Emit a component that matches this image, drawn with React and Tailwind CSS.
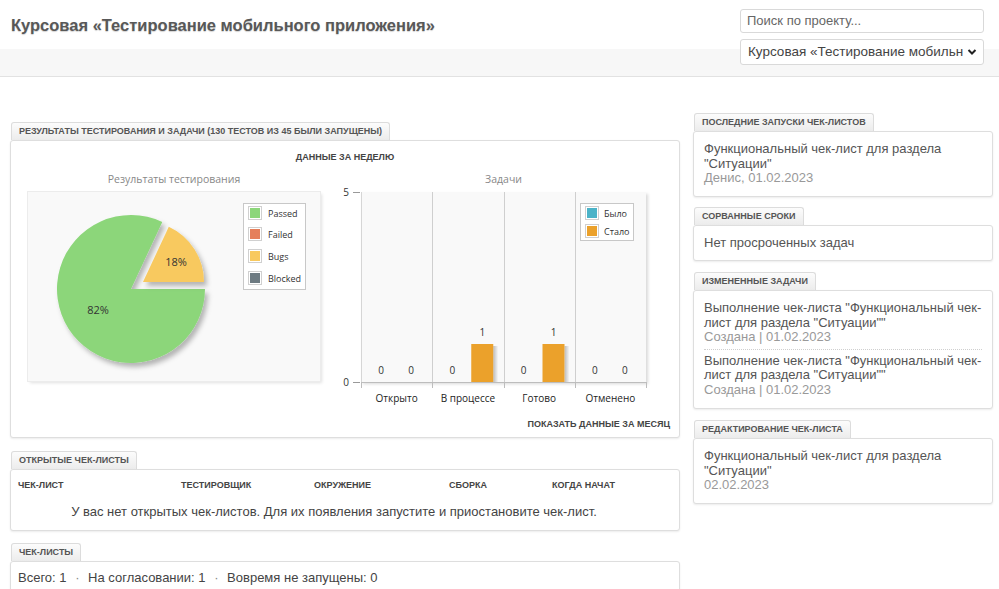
import React from "react";

const chartFont = { fontFamily: '"Open Sans", "DejaVu Sans", sans-serif' };

function Tab({ children }) {
  return (
    <div className="block w-fit ml-px h-[18px] px-[7px] leading-[17px] text-[9px] font-bold uppercase text-[#555] border border-b-0 border-[#dcdcdc] rounded-t-[3px] bg-gradient-to-b from-[#fcfcfc] to-[#ececec] whitespace-nowrap">
      {children}
    </div>
  );
}

function Panel({ className = "", children }) {
  return (
    <div className={`bg-white border border-[#dedede] rounded-[3px] shadow-[0_1px_2px_rgba(0,0,0,0.08)] ${className}`}>
      {children}
    </div>
  );
}

function PieChart() {
  const legend = [
    ["Passed", "#8cd67a"],
    ["Failed", "#e57f5b"],
    ["Bugs", "#f8c95f"],
    ["Blocked", "#6e7b82"],
  ];
  return (
    <div className="w-[292px] h-[189px] bg-[#f9f9f9] shadow-[0_0_0_1px_#ececec,2px_2px_3px_rgba(0,0,0,0.12)]">
      <svg width="292" height="189" className="block" style={chartFont}>
        <defs>
          <filter id="pieShadow" x="-20%" y="-20%" width="140%" height="140%">
            <feDropShadow dx="3" dy="4" stdDeviation="2.5" floodColor="#000" floodOpacity="0.28" />
          </filter>
        </defs>
        <path d="M103,97 L134.3,29.9 A74,74 0 1,0 177,97 Z" fill="#8cd67a" filter="url(#pieShadow)" />
        <path d="M115,90 L176,90 A61,61 0 0,0 140.8,34.7 Z" fill="#f8c95f" filter="url(#pieShadow)" />
        <text x="70" y="122" fontSize="11" fill="#333" textAnchor="middle">82%</text>
        <text x="148" y="74" fontSize="11" fill="#333" textAnchor="middle">18%</text>
        <rect x="215.5" y="11.5" width="62" height="86" fill="#fff" stroke="#c8c8c8" />
        {legend.map(([name, color], i) => {
          const cy = [21, 42, 64, 86][i];
          return (
            <g key={name}>
              <rect x="220.5" y={cy - 6.5} width="13" height="13" fill="#fff" stroke="#d0d0d0" />
              <rect x="222" y={cy - 5} width="10" height="10" fill={color} />
              <text x="240" y={cy + 3.5} fontSize="9" fill="#333">{name}</text>
            </g>
          );
        })}
      </svg>
    </div>
  );
}

function BarChart() {
  const cats = ["Открыто", "В процессе", "Готово", "Отменено"];
  const values = [
    [0, 0],
    [0, 1],
    [0, 1],
    [0, 0],
  ];
  const left = 21;
  const w = 285;
  const step = w / 4;
  return (
    <svg width="320" height="216" className="block overflow-visible" style={chartFont}>
      <defs>
        <filter id="plotShadow" x="-5%" y="-5%" width="110%" height="110%">
          <feDropShadow dx="2" dy="2" stdDeviation="1.5" floodColor="#000" floodOpacity="0.15" />
        </filter>
        <linearGradient id="barShade" x1="0" x2="1" y1="0" y2="0">
          <stop offset="0" stopColor="#000" stopOpacity="0.25" />
          <stop offset="1" stopColor="#000" stopOpacity="0" />
        </linearGradient>
      </defs>
      <rect x={left} y="0" width={w} height="190" fill="#f9f9f9" filter="url(#plotShadow)" />
      <line x1={left + 0.5} x2={left + 0.5} y1="0" y2="190" stroke="#d6d6d6" />
      {[1, 2, 3].map((i) => (
        <line key={i} x1={Math.round(left + step * i) + 0.5} x2={Math.round(left + step * i) + 0.5} y1="0" y2="190" stroke="#cfcfcf" />
      ))}
      <line x1={left} x2={left + w} y1="190.5" y2="190.5" stroke="#bdbdbd" />
      {[0, 1, 2, 3, 4].map((i) => (
        <line key={i} x1={Math.round(left + step * i) + 0.5} x2={Math.round(left + step * i) + 0.5} y1="190" y2="196" stroke="#bdbdbd" />
      ))}
      <line x1="13" x2="20" y1="0.5" y2="0.5" stroke="#999" />
      <line x1="13" x2="20" y1="190.5" y2="190.5" stroke="#999" />
      <text x="6" y="4" fontSize="10" fill="#333" textAnchor="middle">5</text>
      <text x="6" y="194" fontSize="10" fill="#333" textAnchor="middle">0</text>
      {values.map((pair, i) => {
        const x0 = left + step * i;
        return (
          <g key={i}>
            {pair.map((v, j) => {
              const cx = x0 + (j === 0 ? 20 : 50);
              return (
                <g key={j}>
                  {v > 0 && (
                    <>
                      <rect x={cx + 11} y="154" width="5" height="36" fill="url(#barShade)" />
                      <rect x={cx - 11} y="152" width="22" height="38" fill="#eba12b" />
                    </>
                  )}
                  <text x={cx} y={v > 0 ? 144 : 182} fontSize="10" fill="#333" textAnchor="middle">{v}</text>
                </g>
              );
            })}
            <text x={x0 + step / 2} y="210" fontSize="10" fill="#222" textAnchor="middle">{cats[i]}</text>
          </g>
        );
      })}
      <rect x="240.5" y="11.5" width="53" height="37" fill="#fff" stroke="#c8c8c8" />
      {[["Было", "#4bb3c8", 21], ["Стало", "#eba12b", 39]].map(([n, c, cy]) => (
        <g key={n}>
          <rect x="245.5" y={cy - 6.5} width="13" height="13" fill="#fff" stroke="#d0d0d0" />
          <rect x="247" y={cy - 5} width="10" height="10" fill={c} />
          <text x="264" y={cy + 3.5} fontSize="9" fill="#333">{n}</text>
        </g>
      ))}
    </svg>
  );
}

function SideItem({ title, meta }) {
  return (
    <div className="text-[13px] leading-[14.5px]">
      <div className="text-[#555]">{title}</div>
      <div className="text-[#999]">{meta}</div>
    </div>
  );
}

export default function App() {
  return (
    <div className="min-h-screen bg-white text-[#555]" style={{ fontFamily: '"Liberation Sans", Arial, sans-serif' }}>
      {/* Header */}
      <div className="relative">
        <div className="h-[49px] pl-[11px] pt-[15px]">
          <h1 className="text-[16.5px] leading-[20px] font-bold text-[#585858] [text-shadow:0_1px_1px_rgba(0,0,0,0.18)]">
            Курсовая «Тестирование мобильного приложения»
          </h1>
        </div>
        <div className="h-[28px] bg-[#f7f7f7] border-b border-[#e2e2e2]" />
        <div className="absolute right-[15px] top-[9px] w-[244px] flex flex-col gap-[6px]">
          <div className="h-[24px] border border-[#d9d9d9] rounded-[3px] bg-white px-[6px] text-[13px] leading-[22px] text-[#666]">
            Поиск по проекту...
          </div>
          <div className="h-[26px] border border-[#d9d9d9] rounded-[3px] bg-white pl-[7px] pr-[6px] flex items-center justify-between text-[13.5px] text-[#444]">
            <span className="whitespace-nowrap">Курсовая «Тестирование мобильн</span>
            <svg width="10" height="10" viewBox="0 0 10 10">
              <path d="M1.5,3 L5,6.5 L8.5,3" fill="none" stroke="#222" strokeWidth="2" />
            </svg>
          </div>
        </div>
      </div>

      {/* Main */}
      <div className="flex pl-[10px] pr-[6px] pt-[36px] gap-[13px]">
        {/* Left column */}
        <div className="w-[670px] mt-[9px]">
          <Tab>Результаты тестирования и задачи (130 тестов из 45 были запущены)</Tab>
          <Panel className="pb-[7px]">
            <div className="pt-[10px] text-center text-[9px] leading-[12px] font-bold uppercase text-[#444]">
              Данные за неделю
            </div>
            <div className="flex mt-[9px]">
              <div className="ml-[17px] w-[292px]">
                <div className="h-[14px] text-center text-[10.5px] leading-[14px] text-[#888]" style={chartFont}>
                  Результаты тестирования
                </div>
                <div className="mt-[6px]">
                  <PieChart />
                </div>
              </div>
              <div className="ml-[20px] w-[320px]">
                <div className="h-[14px] pl-[21px] w-[306px] text-center text-[10.5px] leading-[14px] text-[#888]" style={chartFont}>
                  Задачи
                </div>
                <div className="mt-[6px]">
                  <BarChart />
                </div>
              </div>
            </div>
            <div className="mt-[10px] pr-[9px] text-right text-[9px] leading-[12px] font-bold uppercase text-[#444]">
              Показать данные за месяц
            </div>
          </Panel>

          <div className="mt-[13px]">
            <Tab>Открытые чек-листы</Tab>
            <Panel className="pt-[9px] pb-[10px]">
              <div className="grid grid-cols-[163px_133px_135px_103px_1fr] pl-[7px] text-[9px] leading-[12px] font-bold uppercase text-[#444]">
                <div>Чек-лист</div>
                <div>Тестировщик</div>
                <div>Окружение</div>
                <div>Сборка</div>
                <div>Когда начат</div>
              </div>
              <div className="mt-[13px] pl-[7px] pr-[29px] text-center text-[13px] leading-[16px] text-[#444]">
                У вас нет открытых чек-листов. Для их появления запустите и приостановите чек-лист.
              </div>
            </Panel>
          </div>

          <div className="mt-[12px]">
            <Tab>Чек-листы</Tab>
            <Panel className="pt-[9px] pb-[10px] pl-[7px]">
              <div className="text-[13px] leading-[14px] text-[#444]">
                Всего: 1 <span className="mx-[5px] text-[#888]">·</span> На согласовании: 1{" "}
                <span className="mx-[5px] text-[#888]">·</span> Вовремя не запущены: 0
              </div>
            </Panel>
          </div>
        </div>

        {/* Right column */}
        <div className="w-[300px]">
          <Tab>Последние запуски чек-листов</Tab>
          <Panel className="px-[10px] pt-[10px] pb-[10px]">
            <SideItem title={'Функциональный чек-лист для раздела "Ситуации"'} meta="Денис, 01.02.2023" />
          </Panel>

          <div className="mt-[10px]">
            <Tab>Сорванные сроки</Tab>
            <Panel className="px-[10px] pt-[10px] pb-[10px]">
              <div className="text-[13px] leading-[14.5px] text-[#555]">Нет просроченных задач</div>
            </Panel>
          </div>

          <div className="mt-[11px]">
            <Tab>Измененные задачи</Tab>
            <Panel className="px-[10px] pt-[10px] pb-[11px]">
              <div className="pb-[4px]">
                <SideItem title={'Выполнение чек-листа "Функциональный чек-лист для раздела "Ситуации""'} meta="Создана | 01.02.2023" />
              </div>
              <div className="border-t border-dotted border-[#cfcfcf] pt-[4px]">
                <SideItem title={'Выполнение чек-листа "Функциональный чек-лист для раздела "Ситуации""'} meta="Создана | 01.02.2023" />
              </div>
            </Panel>
          </div>

          <div className="mt-[11px]">
            <Tab>Редактирование чек-листа</Tab>
            <Panel className="px-[10px] pt-[10px] pb-[10px]">
              <SideItem title={'Функциональный чек-лист для раздела "Ситуации"'} meta="02.02.2023" />
            </Panel>
          </div>
        </div>
      </div>
    </div>
  );
}
